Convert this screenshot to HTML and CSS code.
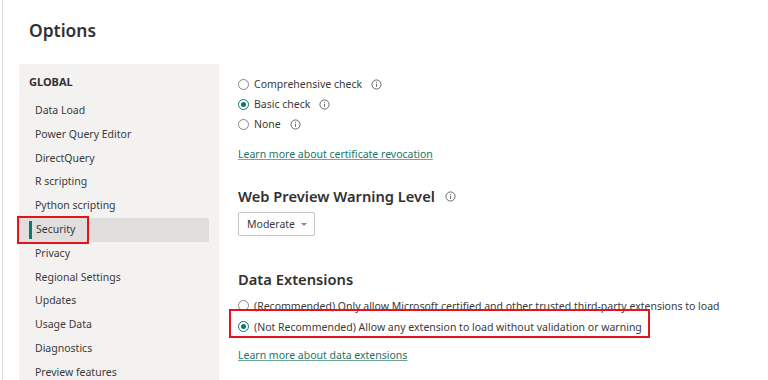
FILE: index.html
```html
<!DOCTYPE html>
<html>
<head>
<meta charset="utf-8">
<link rel="stylesheet" href="styles.css">
</head>
<body>
<div class="frame">
  <h1 class="title">Options</h1>
  <div class="main">
    <nav class="sidebar">
      <div class="group">GLOBAL</div>
      <ul class="nav">
        <li>Data Load</li>
        <li>Power Query Editor</li>
        <li>DirectQuery</li>
        <li>R scripting</li>
        <li>Python scripting</li>
        <li class="active"><span class="bar"></span>Security<span class="mark mark-nav"></span></li>
        <li>Privacy</li>
        <li>Regional Settings</li>
        <li>Updates</li>
        <li>Usage Data</li>
        <li>Diagnostics</li>
        <li>Preview features</li>
      </ul>
    </nav>
    <section class="content">
      <div class="radios first">
        <div class="radio"><span class="dot"></span><span>Comprehensive check</span><svg class="info" viewBox="0 0 12 12"><circle cx="6" cy="6" r="5" fill="none" stroke="#605e5c" stroke-width="1"/><line x1="6" y1="5.2" x2="6" y2="8.6" stroke="#605e5c" stroke-width="1"/><circle cx="6" cy="3.6" r="0.6" fill="#605e5c"/></svg></div>
        <div class="radio"><span class="dot on"></span><span>Basic check</span><svg class="info" viewBox="0 0 12 12"><circle cx="6" cy="6" r="5" fill="none" stroke="#605e5c" stroke-width="1"/><line x1="6" y1="5.2" x2="6" y2="8.6" stroke="#605e5c" stroke-width="1"/><circle cx="6" cy="3.6" r="0.6" fill="#605e5c"/></svg></div>
        <div class="radio"><span class="dot"></span><span>None</span><svg class="info" viewBox="0 0 12 12"><circle cx="6" cy="6" r="5" fill="none" stroke="#605e5c" stroke-width="1"/><line x1="6" y1="5.2" x2="6" y2="8.6" stroke="#605e5c" stroke-width="1"/><circle cx="6" cy="3.6" r="0.6" fill="#605e5c"/></svg></div>
      </div>
      <a class="link link-cert">Learn more about certificate revocation</a>
      <h2 class="heading h-web">Web Preview Warning Level<svg class="info big" viewBox="0 0 12 12"><circle cx="6" cy="6" r="5" fill="none" stroke="#605e5c" stroke-width="1"/><line x1="6" y1="5.2" x2="6" y2="8.6" stroke="#605e5c" stroke-width="1"/><circle cx="6" cy="3.6" r="0.6" fill="#605e5c"/></svg></h2>
      <div class="select">Moderate<span class="caret"></span></div>
      <h2 class="heading h-data">Data Extensions</h2>
      <div class="radios second">
        <div class="radio"><span class="dot"></span><span>(Recommended) Only allow Microsoft certified and other trusted third-party extensions to load</span></div>
        <div class="radio r-selected"><span class="dot on"></span><span>(Not Recommended) Allow any extension to load without validation or warning</span><span class="mark mark-ext"></span></div>
      </div>
      <a class="link link-ext">Learn more about data extensions</a>
    </section>
  </div>
</div>
</body>
</html>
```

FILE: styles.css
```css
html, body {
  margin: 0;
  padding: 0;
  background: #ffffff;
  height: 380px;
  overflow: hidden;
}
body {
  font-family: "Noto Sans", "Open Sans", "DejaVu Sans", sans-serif;
  color: #323130;
  padding-left: 2px;
}
.frame {
  border-left: 1px solid #d9d9d9;
  height: 380px;
  box-sizing: border-box;
}
.title {
  margin: 0;
  padding: 18px 0 0 26px;
  height: 47px;
  box-sizing: border-box;
  font-size: 17.4px;
  font-weight: 600;
  line-height: 24px;
  color: #323130;
}
.main {
  display: flex;
  gap: 19px;
  margin-top: 17px;
}
.sidebar {
  flex: none;
  width: 200px;
  margin-left: 16px;
  height: 330px;
  background: #f3f2f1;
  padding-top: 8px;
  box-sizing: border-box;
}
.group {
  font-size: 11px;
  font-weight: 700;
  line-height: 20px;
  padding-left: 10px;
  margin-bottom: 7px;
  color: #323130;
}
.nav {
  list-style: none;
  margin: 0;
  padding: 0;
}
.nav li {
  position: relative;
  height: 23.8px;
  line-height: 23.8px;
  font-size: 10.5px;
  padding-left: 16px;
  margin-right: 10px;
  white-space: nowrap;
  color: #3b3a39;
}
.nav li.active {
  background: #e1dfdd;
  padding-left: 17px;
}
.bar {
  position: absolute;
  left: 10px;
  top: 3px;
  width: 3px;
  height: 18px;
  background: #117865;
}
.mark {
  position: absolute;
  border: 2px solid #e3141b;
  box-sizing: border-box;
}
.mark-nav {
  left: -2px;
  top: -2px;
  width: 72px;
  height: 28px;
}
.content {
  flex: 1;
  display: flex;
  flex-direction: column;
  align-items: flex-start;
  font-size: 10.5px;
  color: #3b3a39;
}
.radios.first {
  margin-top: 10px;
}
.radio {
  position: relative;
  display: flex;
  align-items: center;
  height: 20px;
  white-space: nowrap;
}
.dot {
  width: 11px;
  height: 11px;
  border: 1px solid #8a8886;
  border-radius: 50%;
  box-sizing: border-box;
  margin-right: 5px;
  position: relative;
  flex: none;
}
.dot.on {
  border-color: #117865;
}
.dot.on::after {
  content: "";
  position: absolute;
  left: 2px;
  top: 2px;
  width: 5px;
  height: 5px;
  border-radius: 50%;
  background: #117865;
}
.info {
  width: 11px;
  height: 11px;
  margin-left: 9px;
  flex: none;
}
.info.big {
  margin-left: 10px;
}
.link {
  color: #1d7464;
  text-decoration: underline;
  text-decoration-color: #6aa89b;
  line-height: 20px;
  font-size: 10.5px;
}
.link-cert {
  margin-top: 10px;
}
.heading {
  margin: 0;
  font-size: 14.7px;
  font-weight: 600;
  line-height: 22px;
  color: #323130;
  display: flex;
  align-items: center;
}
.h-web {
  margin-top: 21px;
}
.select {
  margin-top: 5px;
  height: 24px;
  box-sizing: border-box;
  border: 1px solid #c8c6c4;
  border-radius: 2px;
  padding: 0 7px 0 8px;
  display: flex;
  align-items: center;
  font-size: 10.5px;
  color: #3b3a39;
}
.caret {
  width: 0;
  height: 0;
  border-left: 3px solid transparent;
  border-right: 3px solid transparent;
  border-top: 3px solid #8a8886;
  margin-left: 6px;
}
.h-data {
  margin-top: 32px;
}
.radios.second {
  margin-top: 5px;
}
.radios.second .radio {
  height: 21px;
}
.r-selected {
  position: relative;
}
.mark-ext {
  left: -9px;
  top: -7px;
  width: 421px;
  height: 29px;
}
.link-ext {
  margin-top: 8px;
}
```
